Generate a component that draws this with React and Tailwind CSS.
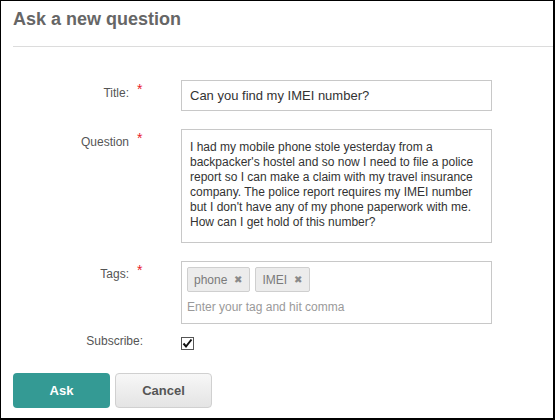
import { useState } from "react";

const font = { fontFamily: '"Liberation Sans", Arial, sans-serif' };

function Label({ text, required }) {
  return (
    <div className="w-[130px] flex justify-end pt-[6px] text-[12px] leading-[15px] text-[#555]">
      <span>{text}</span>
      {required && (
        <span className="ml-[8px] w-[6px] -mt-[2px] text-[14px] leading-[11px] text-[#e8202a]">*</span>
      )}
      {!required && <span className="w-[1px]" />}
    </div>
  );
}

function Tag({ name }) {
  return (
    <span className="flex items-center h-[25px] pl-[6px] pr-[7px] bg-[#ececec] border border-[#cfcfcf] rounded-[2px] text-[12px] text-[#7a7a7a]">
      {name}
      <span className="ml-[7px] text-[10px] text-[#8a8a8a]">✖</span>
    </span>
  );
}

export default function App() {
  const [title, setTitle] = useState("Can you find my IMEI number?");
  const [subscribed, setSubscribed] = useState(true);

  const question =
    "I had my mobile phone stole yesterday from a\nbackpacker's hostel and so now I need to file a police\nreport so I can make a claim with my travel insurance\ncompany. The police report requires my IMEI number\nbut I don't have any of my phone paperwork with me.\nHow can I get hold of this number?";

  return (
    <div
      style={font}
      className="w-[555px] h-[420px] bg-white border-l border-t border-r-2 border-b-2 border-black"
    >
      <h1 className="pl-[12px] pt-[7px] text-[18px] leading-[22px] font-bold text-[#666]">
        Ask a new question
      </h1>
      <div className="ml-[12px] mt-[16px] border-t border-[#dcdcdc]" />

      <div className="pl-[12px] pt-[33px]">
        {/* title */}
        <div className="flex">
          <Label text="Title:" required />
          <input
            value={title}
            onChange={(e) => setTitle(e.target.value)}
            className="ml-[38px] w-[311px] h-[31px] px-[8px] border border-[#c8c8c8] text-[13px] text-[#333] outline-none"
          />
        </div>

        {/* question */}
        <div className="flex mt-[18px]">
          <Label text="Question" required />
          <textarea
            defaultValue={question}
            className="ml-[38px] w-[311px] h-[114px] pt-[10px] px-[8px] border border-[#c8c8c8] text-[12px] leading-[15px] text-[#333] resize-none overflow-hidden outline-none whitespace-pre"
          />
        </div>

        {/* tags */}
        <div className="flex mt-[18px]">
          <Label text="Tags:" required />
          <div className="ml-[38px] w-[311px] h-[63px] pt-[5px] px-[5px] border border-[#c8c8c8]">
            <div className="flex gap-[5px]">
              <Tag name="phone" />
              <Tag name="IMEI" />
            </div>
            <input
              placeholder="Enter your tag and hit comma"
              className="mt-[8px] w-full text-[12px] leading-[15px] placeholder:text-[#9a9a9a] outline-none"
            />
          </div>
        </div>

        {/* subscribe */}
        <div className="flex mt-[10px]">
          <div className="w-[130px] text-right text-[12px] leading-[15px] text-[#555]">Subscribe:</div>
          <button
            onClick={() => setSubscribed(!subscribed)}
            className="ml-[38px] mt-[3px] w-[13px] h-[13px] border border-[#555] bg-white flex items-center justify-center"
          >
            {subscribed && (
              <svg width="11" height="11" viewBox="0 0 11 11">
                <path d="M1.5 5.5 L4 8.5 L9.5 1.5" fill="none" stroke="#111" strokeWidth="2" />
              </svg>
            )}
          </button>
        </div>

        {/* actions */}
        <div className="flex gap-[5px] mt-[23px]">
          <button className="w-[97px] h-[35px] rounded-[4px] bg-[#349a94] text-white text-[13px] font-bold">
            Ask
          </button>
          <button className="w-[97px] h-[35px] rounded-[4px] border border-[#d0d0d0] bg-gradient-to-b from-[#f7f7f7] to-[#e4e4e4] text-[#555] text-[13px] font-bold">
            Cancel
          </button>
        </div>
      </div>
    </div>
  );
}
